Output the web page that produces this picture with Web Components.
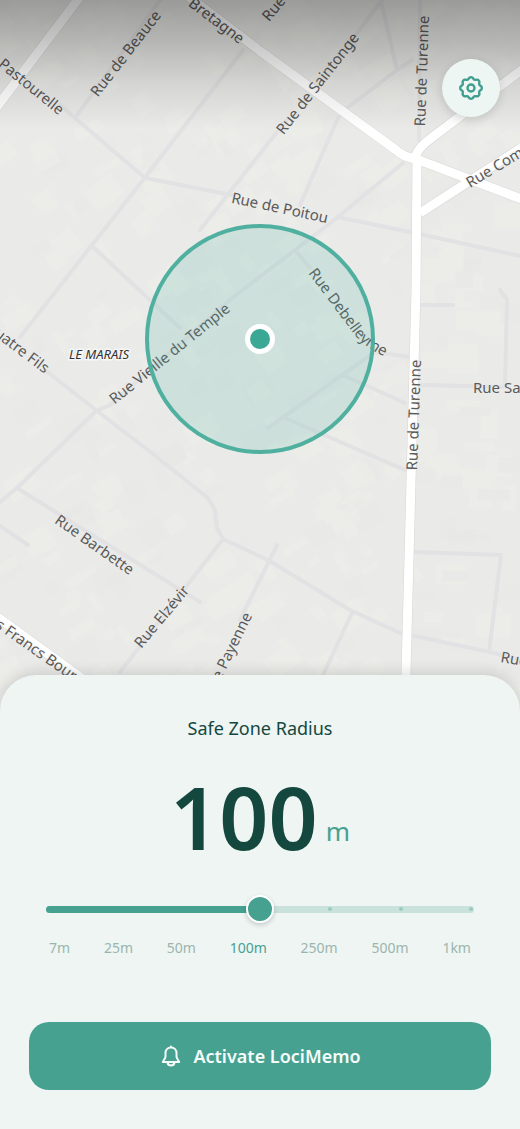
<!DOCTYPE html>
<html lang="en">
<head>
<meta charset="utf-8">
<meta name="viewport" content="width=device-width, initial-scale=1">
<title>LociMemo</title>
<style>
  body { margin: 0; font-family: "Noto Sans", sans-serif; color: #14483e; background: #eef5f3; }
</style>
</head>
<body>
<loci-app>
  <street-map slot="map"></street-map>
  <round-button slot="action" label="Settings">
    <svg width="28" height="28" viewBox="0 0 24 24" fill="none" stroke="#3f9e8d" stroke-width="2" stroke-linejoin="round"><path id="gear"/><circle cx="12" cy="12" r="3"/></svg>
  </round-button>
  <zone-panel slot="panel"></zone-panel>
</loci-app>

<script>
const define = (name, html, setup) => {
  const template = document.createElement('template');
  template.innerHTML = html;
  customElements.define(name, class extends HTMLElement {
    constructor() {
      super();
      this.attachShadow({ mode: 'open' }).append(template.content.cloneNode(true));
    }
    connectedCallback() { if (setup) setup(this, this.shadowRoot); }
  });
};

/* Eight-lobed gear outline around (12, 12) */
const gearPath = () => {
  let d = '';
  for (let i = 0; i <= 96; i++) {
    const a = i / 96 * Math.PI * 2;
    const r = 8.4 + 0.9 * Math.tanh(1.3 * Math.cos(8 * a) + 0.3);
    d += (i ? 'L' : 'M') + (12 + r * Math.sin(a)).toFixed(2) + ' ' + (12 - r * Math.cos(a)).toFixed(2);
  }
  return d + 'Z';
};
document.getElementById('gear').setAttribute('d', gearPath());

define('loci-app', `
  <style>
    :host { display: flex; flex-direction: column; min-height: 100vh; position: relative; }
    .map { flex: 1; display: grid; min-height: 420px; }
    .action { position: absolute; top: 59px; right: 20px; }
    .panel { position: relative; margin-top: -36px; }
  </style>
  <div class="map"><slot name="map"></slot></div>
  <div class="action"><slot name="action"></slot></div>
  <div class="panel"><slot name="panel"></slot></div>`);

define('round-button', `
  <style>
    :host { display: block; }
    button { display: grid; place-items: center; width: 58px; height: 58px; padding: 0; border: 0;
      border-radius: 50%; background: #eef6f4; box-shadow: 0 3px 10px rgba(0,0,0,.14); cursor: pointer; }
  </style>
  <button type="button"><slot></slot></button>`,
  (host, root) => root.querySelector('button').setAttribute('aria-label', host.getAttribute('label')));

define('street-map', `
  <style>
    :host { display: block; position: relative; overflow: hidden; background: #eaeae8; }
    svg { position: absolute; inset: 0; width: 100%; height: 100%; }
    text { font: 15px "Noto Sans", sans-serif; fill: #5a5a5a; stroke: rgba(238,238,236,.4); stroke-width: 2px; paint-order: stroke; }
    .district { font-size: 13px; font-style: italic; fill: #333; stroke: #f6f6f4; stroke-width: 3px; }
    .minor { fill: none; stroke: #e2e1e3; stroke-width: 4; stroke-linecap: round; stroke-linejoin: round; }
    .edge, .road { fill: none; stroke-linejoin: round; }
    .edge { stroke: #d6d6d6; stroke-width: 10; }
    .road { stroke: #fff; stroke-width: 9; }
    .shade { position: absolute; inset: 0 0 auto; height: 130px;
      background: linear-gradient(rgba(0,0,0,.34), rgba(0,0,0,.23) 30%, rgba(0,0,0,.09) 65%, transparent); }
  </style>
  <svg viewBox="0 0 520 711" preserveAspectRatio="xMidYMid slice">
    <g id="blocks"></g>
    <path class="minor" d="M163-4 75 118M60 105 75 118 145 178 232 195M243 50 143 180 20 337M288 118 200 230M385-4 357 33M382 5 397 70 347 108 338 118 300 205M397 70 412 60M403 163 338 217 295 250 232 298 110 405 96 411 17 488 0 502M337 217 410 232 520 256M93 247 180 328M45 370 97 411 148 450 208 498 215 510 217 528 223 539 268 560 350 610 400 633 490 652 520 660M223 539 120 672M17 488 200 602M0 526 28 545M277 545 240 620M352 613 323 675M414 552 501 555 489 652M295 250 310 268M268 428 345 373 375 352 410 357M343 375 405 403M285 418 405 470M420 305 453 305M420 385 505 387 507 300 500 290M420 0 419 140"/>
    <path class="edge" d="M82-6-4 108M180-10 260 51 396 150Q403 157 416 159L524 200M416 157Q416 150 430 139L524 68M420 213 468 182 524 146M-4 616 84 680"/>
    <path class="edge" d="M417 160 416 290 405 711"/>
    <path class="road" d="M82-6-4 108M180-10 260 51 396 150Q403 157 416 159L524 200M416 157Q416 150 430 139L524 68M420 213 468 182 524 146M-4 616 84 680"/>
    <path class="road" d="M417 160 416 290 405 711"/>
    <path id="curve" fill="none" d="M308 273 348 326Q362 348 392 360"/>
    <g id="labels"></g>
    <text><textPath href="#curve">Rue Debelleyme</textPath></text>
    <circle cx="260" cy="339" r="113" fill="#46b29f" fill-opacity=".17" stroke="#4fb0a0" stroke-width="4"/>
    <circle cx="260" cy="339" r="15" fill="#fff"/>
    <circle cx="260" cy="339" r="10" fill="#3ba795"/>
  </svg>
  <div class="shade"></div>`,
  (host, root) => {
    /* text, x, y, angle, anchor */
    const labels = [
      ['Pastourelle', 32, 86, 39, 'middle'],
      ['Rue de Beauce', 125, 53, -52, 'middle'],
      ['Bretagne', 217, 20, 37, 'middle'],
      ['Rue', 273, 8, -50, 'middle'],
      ['Rue de Saintonge', 317, 83, -52, 'middle'],
      ['Rue de Turenne', 421, 71, -88, 'middle'],
      ['Rue Com', 467, 183, -31, 'start'],
      ['Rue de Poitou', 280, 207, 12, 'middle'],
      ['uatre Fils', 48, 369, 37, 'end'],
      ['Rue Vieille du Temple', 169, 353, -39, 'middle'],
      ['Rue de Turenne', 413, 415, -88, 'middle'],
      ['Rue Sa', 473, 387, 0, 'start'],
      ['Rue Barbette', 95, 544, 35, 'middle'],
      ['Rue Elzévir', 161, 616, -50, 'middle'],
      ['e Payenne', 247, 613, -64, 'end'],
      ['s Francs Bour', -2, 622, 35, 'start'],
      ['Rue', 501, 656, 10, 'start'],
    ];
    root.getElementById('labels').innerHTML = labels.map(([t, x, y, a, anchor]) =>
      `<text transform="translate(${x} ${y}) rotate(${a})" y="6" text-anchor="${anchor}">${t}</text>`).join('')
      + '<text class="district" x="99" y="359" text-anchor="middle">LE MARAIS</text>';

    /* Faint building footprints, from a fixed seed */
    let seed = 7;
    const rnd = () => (seed = seed * 16807 % 2147483647) / 2147483647;
    let out = '';
    for (let i = 0; i < 420; i++) {
      const x = rnd() * 520, y = rnd() * 700, w = 8 + rnd() * 26, h = 6 + rnd() * 20;
      const turn = x > 420 && y > 200 ? 1 : -38 + rnd() * 10;
      out += `<rect x="${-w / 2}" y="${-h / 2}" width="${w}" height="${h}" transform="translate(${x} ${y}) rotate(${turn})" fill="${rnd() > .35 ? '#ecede8' : '#e8e8e6'}" fill-opacity=".6"/>`;
    }
    root.getElementById('blocks').innerHTML = out;
  });

define('zone-panel', `
  <style>
    :host { display: block; box-sizing: border-box; padding: 40px 29px 39px; border-radius: 36px 36px 0 0;
      background: #eef5f3; box-shadow: 0 -3px 14px rgba(0,0,0,.13); }
    .title { display: block; text-align: center; font-size: 18px; line-height: 26px; }
    .value { display: flex; justify-content: center; align-items: flex-end; gap: 8px; margin-top: 28px; }
    .number { font-size: 86px; line-height: 96px; font-weight: 600; }
    .unit { font-size: 26px; line-height: 68px; color: #46a191; }
    .slider { margin: 30px 17px 0; display: grid; align-items: center; height: 28px; position: relative; }
    .track { height: 7px; border-radius: 4px; overflow: hidden; background: #c9e3dc; display: grid; align-items: center; }
    .fill, .ticks { grid-area: 1 / 1; }
    .fill { height: 7px; width: 50%; background: #46a191; }
    .ticks { display: flex; justify-content: space-between; padding: 0 1px; }
    .ticks i { width: 4px; height: 4px; border-radius: 50%; background: #9bcbbf; }
    .ticks i.past { background: #46a191; }
    input { position: absolute; inset: 0 -11px; width: auto; height: 28px; margin: 0; appearance: none; background: none; cursor: pointer; }
    input::-webkit-slider-runnable-track { height: 28px; background: none; }
    input::-webkit-slider-thumb { appearance: none; box-sizing: border-box; width: 28px; height: 28px; border-radius: 50%;
      border: 2px solid #fff; background: #46a191; box-shadow: 0 2px 5px rgba(0,0,0,.18); }
    .stops { display: flex; justify-content: space-between; margin: 15px 20px 0; font-size: 14px; line-height: 20px; color: #9bb5ae; }
    .stops .on { color: #46a191; }
    .go { display: flex; justify-content: center; align-items: center; gap: 10px; width: 100%; height: 68px; margin-top: 64px;
      padding: 0; border: 0; border-radius: 20px; background: #46a191; color: #f4fbf9; font: 600 18px/26px "Noto Sans", sans-serif; cursor: pointer; }
  </style>
  <label class="title" for="radius">Safe Zone Radius</label>
  <div class="value"><span class="number">100</span><span class="unit">m</span></div>
  <div class="slider">
    <div class="track"><div class="fill"></div><div class="ticks"></div></div>
    <input id="radius" type="range" min="0" max="6" step="1" value="3">
  </div>
  <div class="stops"></div>
  <button class="go" type="button">
    <svg width="24" height="24" viewBox="0 0 24 24" fill="none" stroke="currentColor" stroke-width="2" stroke-linejoin="round" stroke-linecap="round"><path d="M12 2.500v1M12 3.500C8.600 3.500 6.500 6 6.500 9v3.500C6.500 14.500 4.500 16 3.800 18H20.200C19.500 16 17.500 14.500 17.500 12.500V9C17.500 6 15.400 3.500 12 3.500ZM8.500 18.500C8.800 20.500 10.200 21.500 12 21.500S15.200 20.500 15.500 18.500"/></svg>
    <span>Activate LociMemo</span>
  </button>`,
  (host, root) => {
    const stops = [['7', 'm'], ['25', 'm'], ['50', 'm'], ['100', 'm'], ['250', 'm'], ['500', 'm'], ['1', 'km']];
    const $ = s => root.querySelector(s);
    const update = () => {
      const v = +$('input').value;
      $('.number').textContent = stops[v][0];
      $('.unit').textContent = stops[v][1];
      $('.fill').style.width = v / 6 * 100 + '%';
      $('.ticks').innerHTML = stops.map((s, i) => `<i class="${i <= v ? 'past' : ''}"></i>`).join('');
      $('.stops').innerHTML = stops.map((s, i) => `<span class="${i === v ? 'on' : ''}">${s.join('')}</span>`).join('');
    };
    $('input').addEventListener('input', update);
    update();
  });
</script>
</body>
</html>
